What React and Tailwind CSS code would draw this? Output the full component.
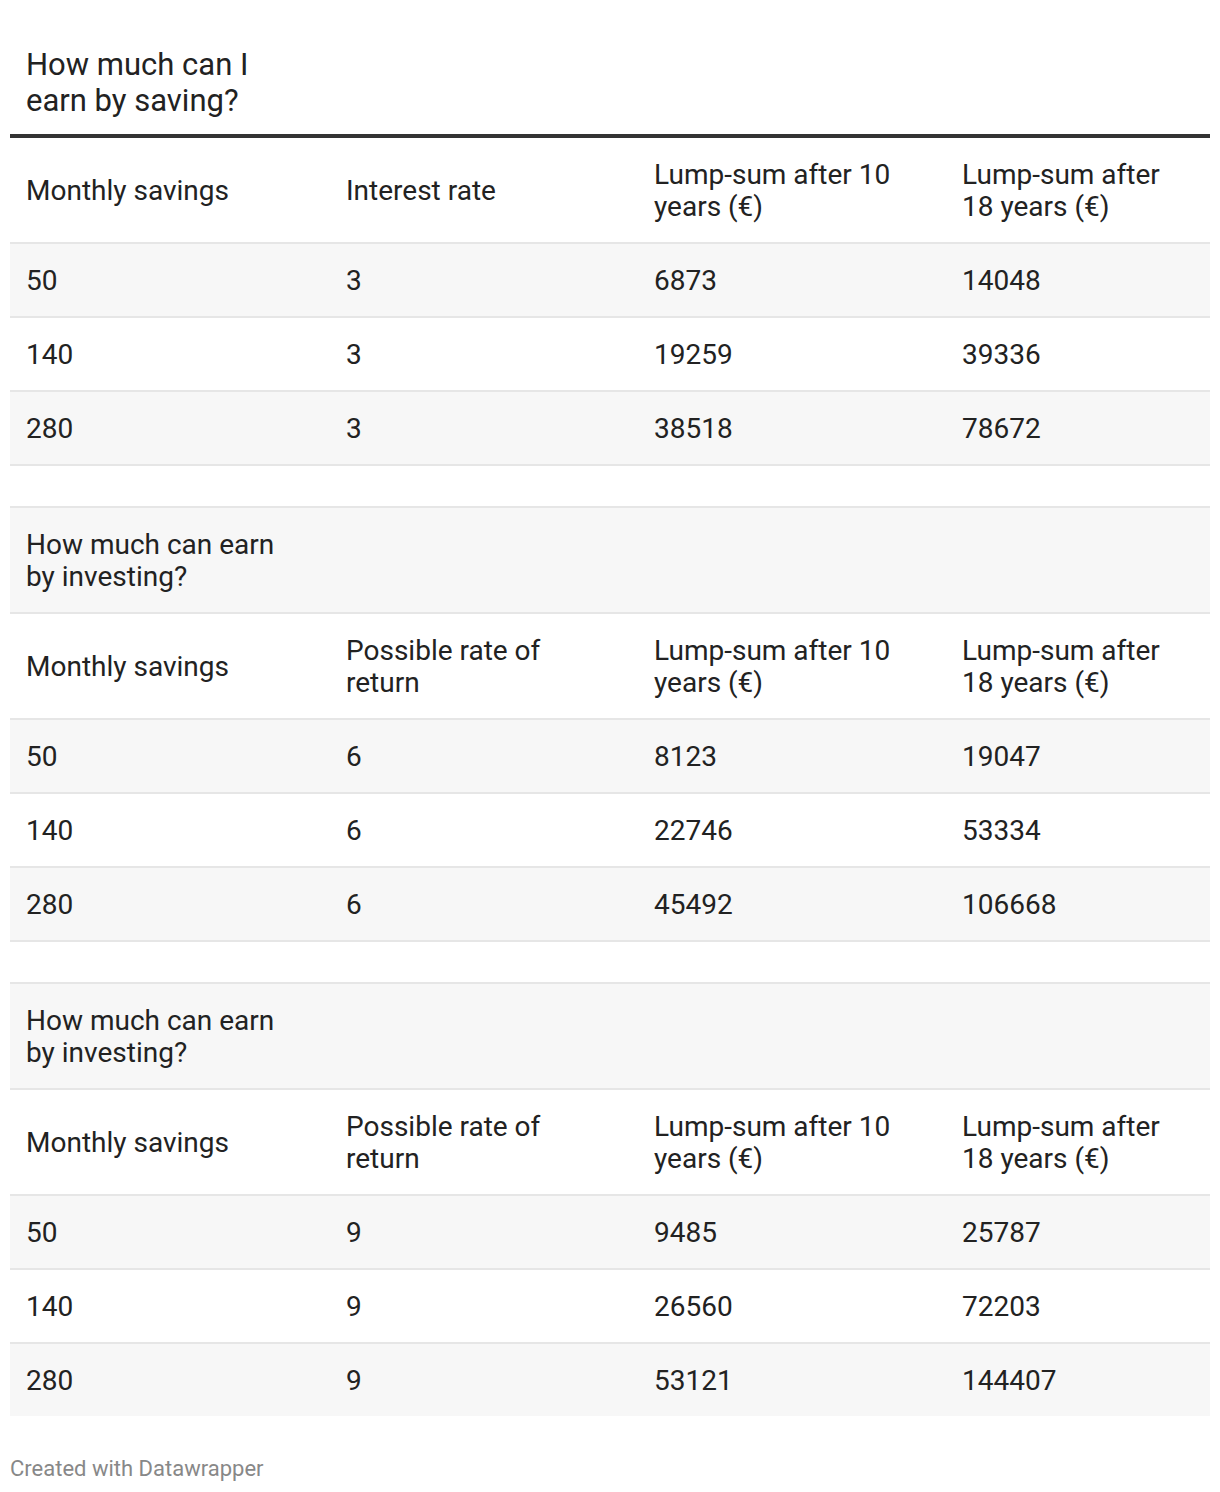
import React from "react";

const sections = [
  {
    title: null,
    header: ["Monthly savings", "Interest rate", ["Lump-sum after 10", "years (€)"], ["Lump-sum after", "18 years (€)"]],
    rows: [
      ["50", "3", "6873", "14048"],
      ["140", "3", "19259", "39336"],
      ["280", "3", "38518", "78672"],
    ],
  },
  {
    title: ["How much can earn", "by investing?"],
    header: ["Monthly savings", ["Possible rate of", "return"], ["Lump-sum after 10", "years (€)"], ["Lump-sum after", "18 years (€)"]],
    rows: [
      ["50", "6", "8123", "19047"],
      ["140", "6", "22746", "53334"],
      ["280", "6", "45492", "106668"],
    ],
  },
  {
    title: ["How much can earn", "by investing?"],
    header: ["Monthly savings", ["Possible rate of", "return"], ["Lump-sum after 10", "years (€)"], ["Lump-sum after", "18 years (€)"]],
    rows: [
      ["50", "9", "9485", "25787"],
      ["140", "9", "26560", "72203"],
      ["280", "9", "53121", "144407"],
    ],
  },
];

function Txt({ v }) {
  if (Array.isArray(v)) {
    return (
      <>
        {v[0]}
        <br />
        {v[1]}
      </>
    );
  }
  return v;
}

export default function App() {
  const body = [];
  sections.forEach((s, si) => {
    if (si > 0) {
      body.push({ kind: "empty" });
      body.push({ kind: "title", v: s.title });
      body.push({ kind: "cells", cells: s.header });
    }
    s.rows.forEach((r) => body.push({ kind: "cells", cells: r }));
  });

  const cell = "px-4 pt-[21px] pb-[19px] align-middle text-left font-normal whitespace-nowrap";

  return (
    <div
      className="p-[10px] bg-white text-[#222222]"
      style={{ fontFamily: "Roboto, 'Noto Sans', Arial, sans-serif" }}
    >
      <div className="pl-4 pt-[37px] pb-[15px] text-[31px] leading-[36px]">
        How much can I
        <br />
        earn by saving?
      </div>
      <table className="w-[1200px] table-fixed border-separate border-spacing-0 text-[28px] leading-[32px]">
        <colgroup>
          <col className="w-[320px]" />
          <col className="w-[308px]" />
          <col className="w-[308px]" />
          <col className="w-[264px]" />
        </colgroup>
        <thead>
          <tr className="bg-white">
            {sections[0].header.map((h, i) => (
              <th key={i} className={`${cell} border-t-4 border-t-[#333333] border-b-2 border-b-[#e6e6e6]`}>
                <Txt v={h} />
              </th>
            ))}
          </tr>
        </thead>
        <tbody>
          {body.map((row, ri) => {
            const bg = ri % 2 === 0 ? "bg-[#f7f7f7]" : "bg-white";
            const last = ri === body.length - 1;
            const bb = last ? "" : "border-b-2 border-b-[#e6e6e6]";
            if (row.kind === "empty") {
              return (
                <tr key={ri} className={bg}>
                  {[0, 1, 2, 3].map((c) => (
                    <td key={c} className={`px-4 py-5 ${bb}`}></td>
                  ))}
                </tr>
              );
            }
            if (row.kind === "title") {
              return (
                <tr key={ri} className={bg}>
                  <td className={`${cell} ${bb}`}>
                    <Txt v={row.v} />
                  </td>
                  {[1, 2, 3].map((c) => (
                    <td key={c} className={`${cell} ${bb}`}></td>
                  ))}
                </tr>
              );
            }
            return (
              <tr key={ri} className={bg}>
                {row.cells.map((c, ci) => (
                  <td key={ci} className={`${cell} ${bb}`}>
                    <Txt v={c} />
                  </td>
                ))}
              </tr>
            );
          })}
        </tbody>
      </table>
      <div className="mt-[40px] text-[22px] leading-[26px] text-[#888888]">
        Created with Datawrapper
      </div>
    </div>
  );
}
